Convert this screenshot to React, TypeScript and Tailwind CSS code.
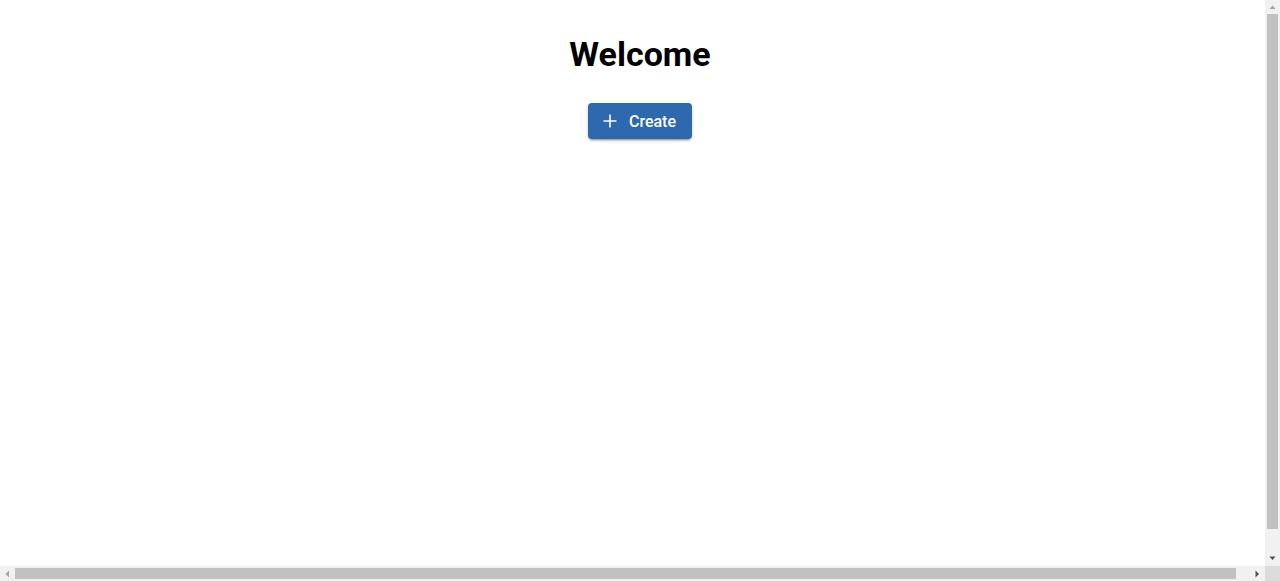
import React from "react";

function Arrow({ dir, dark }: { dir: "up" | "down" | "left" | "right"; dark?: boolean }) {
  const fill = dark ? "#505050" : "#a3a3a3";
  const pts =
    dir === "up"
      ? "0.5,4 3.5,0.5 6.5,4"
      : dir === "down"
      ? "0.5,0.5 6.5,0.5 3.5,4"
      : dir === "left"
      ? "4,0.5 4,7.5 0.5,4"
      : "0.5,0.5 0.5,7.5 4,4";
  const w = dir === "up" || dir === "down" ? 7 : 5;
  const h = dir === "up" || dir === "down" ? 5 : 8;
  return (
    <svg width={w} height={h} viewBox={`0 0 ${w} ${h}`}>
      <polygon points={pts} fill={fill} />
    </svg>
  );
}

export default function App() {
  return (
    <div className="w-screen h-screen flex flex-col bg-white overflow-hidden">
      <div className="flex-1 flex min-h-0">
        <div className="flex-1 overflow-hidden">
          <div
            className="w-[1280px] h-[590px] flex flex-col items-center"
            style={{ fontFamily: "Roboto, 'Noto Sans', sans-serif" }}
          >
            <h1 className="mt-[32px] text-[34px] leading-[44px] font-bold text-black">Welcome</h1>
            <button className="mt-[27px] h-9 flex items-center gap-[11px] pl-[14px] pr-4 rounded bg-[#2e68ae] text-white text-[16px] font-medium shadow-[0_3px_1px_-2px_rgba(0,0,0,0.2),0_2px_2px_0_rgba(0,0,0,0.14),0_1px_5px_0_rgba(0,0,0,0.12)]">
              <svg width="16" height="16" viewBox="0 0 16 16" fill="none" stroke="currentColor" strokeWidth="1.6">
                <path d="M8 1.5v13M1.5 8h13" />
              </svg>
              <span className="pt-[1px]">Create</span>
            </button>
          </div>
        </div>
        {/* vertical scrollbar */}
        <div className="w-[15px] bg-[#f1f1f1] flex flex-col items-center">
          <div className="h-[14px] flex items-center justify-center">
            <Arrow dir="up" />
          </div>
          <div className="w-[11px] h-[515px] bg-[#c1c1c1]" />
          <div className="flex-1" />
          <div className="h-[15px] flex items-center justify-center">
            <Arrow dir="down" dark />
          </div>
        </div>
      </div>
      {/* horizontal scrollbar */}
      <div className="h-[15px] flex">
        <div className="flex-1 bg-[#f1f1f1] flex items-center">
          <div className="w-[15px] flex items-center justify-center">
            <Arrow dir="left" />
          </div>
          <div className="w-[1221px] h-[11px] bg-[#c1c1c1]" />
          <div className="flex-1" />
          <div className="w-[15px] flex items-center justify-center">
            <Arrow dir="right" dark />
          </div>
        </div>
        <div className="w-[15px] bg-[#dcdcdc]" />
      </div>
    </div>
  );
}
